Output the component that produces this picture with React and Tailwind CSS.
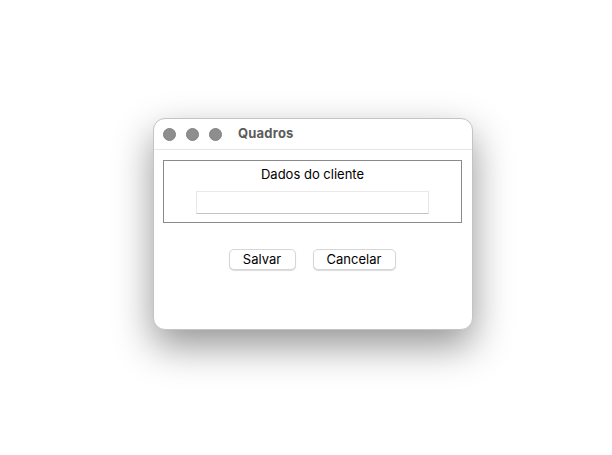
import React from 'react';

const App = () => {
    return (
        <div className="w-[612px] h-[455px] bg-white pt-[118px] pl-[153px] font-['Inter','Liberation_Sans',sans-serif]">
            {/* Window */}
            <div className="w-[320px] h-[212px] bg-white rounded-[12px] border border-[#c4c4c4] shadow-[0_16px_38px_rgba(0,0,0,0.42)] flex flex-col overflow-hidden">

                {/* Title bar */}
                <div className="h-[31px] shrink-0 flex items-center px-[9px] border-b border-[#e6e6e6]">
                    <div className="flex gap-[10px]">
                        <div className="w-[13px] h-[13px] rounded-full bg-[#8e8e8e] border border-[#808080]" />
                        <div className="w-[13px] h-[13px] rounded-full bg-[#8e8e8e] border border-[#808080]" />
                        <div className="w-[13px] h-[13px] rounded-full bg-[#8e8e8e] border border-[#808080]" />
                    </div>
                    <span className="ml-[16px] text-[13px] font-bold tracking-[0.2px] text-[#5c5c5c]">Quadros</span>
                </div>

                {/* Content */}
                <div className="flex-1 px-[9px] pt-[10px]">
                    <div className="w-[299px] h-[63px] border border-[#8a8a8a] flex flex-col items-center">
                        <span className="mt-[5px] text-[13px] leading-[16px] text-black">Dados do cliente</span>
                        <div className="mt-[9px] w-[233px] h-[23px] bg-white border border-[#e8e8e8] border-b-[#c4c4c4]" />
                    </div>

                    <div className="mt-[26px] flex justify-center gap-[17px] pr-[2px]">
                        <button className="w-[67px] h-[21px] rounded-[5px] bg-white border border-[#d6d6d6] shadow-[0_1px_1px_rgba(0,0,0,0.15)] text-[13px] text-black leading-none">Salvar</button>
                        <button className="w-[83px] h-[21px] rounded-[5px] bg-white border border-[#d6d6d6] shadow-[0_1px_1px_rgba(0,0,0,0.15)] text-[13px] text-black leading-none">Cancelar</button>
                    </div>
                </div>
            </div>
        </div>
    );
};

export default App;
